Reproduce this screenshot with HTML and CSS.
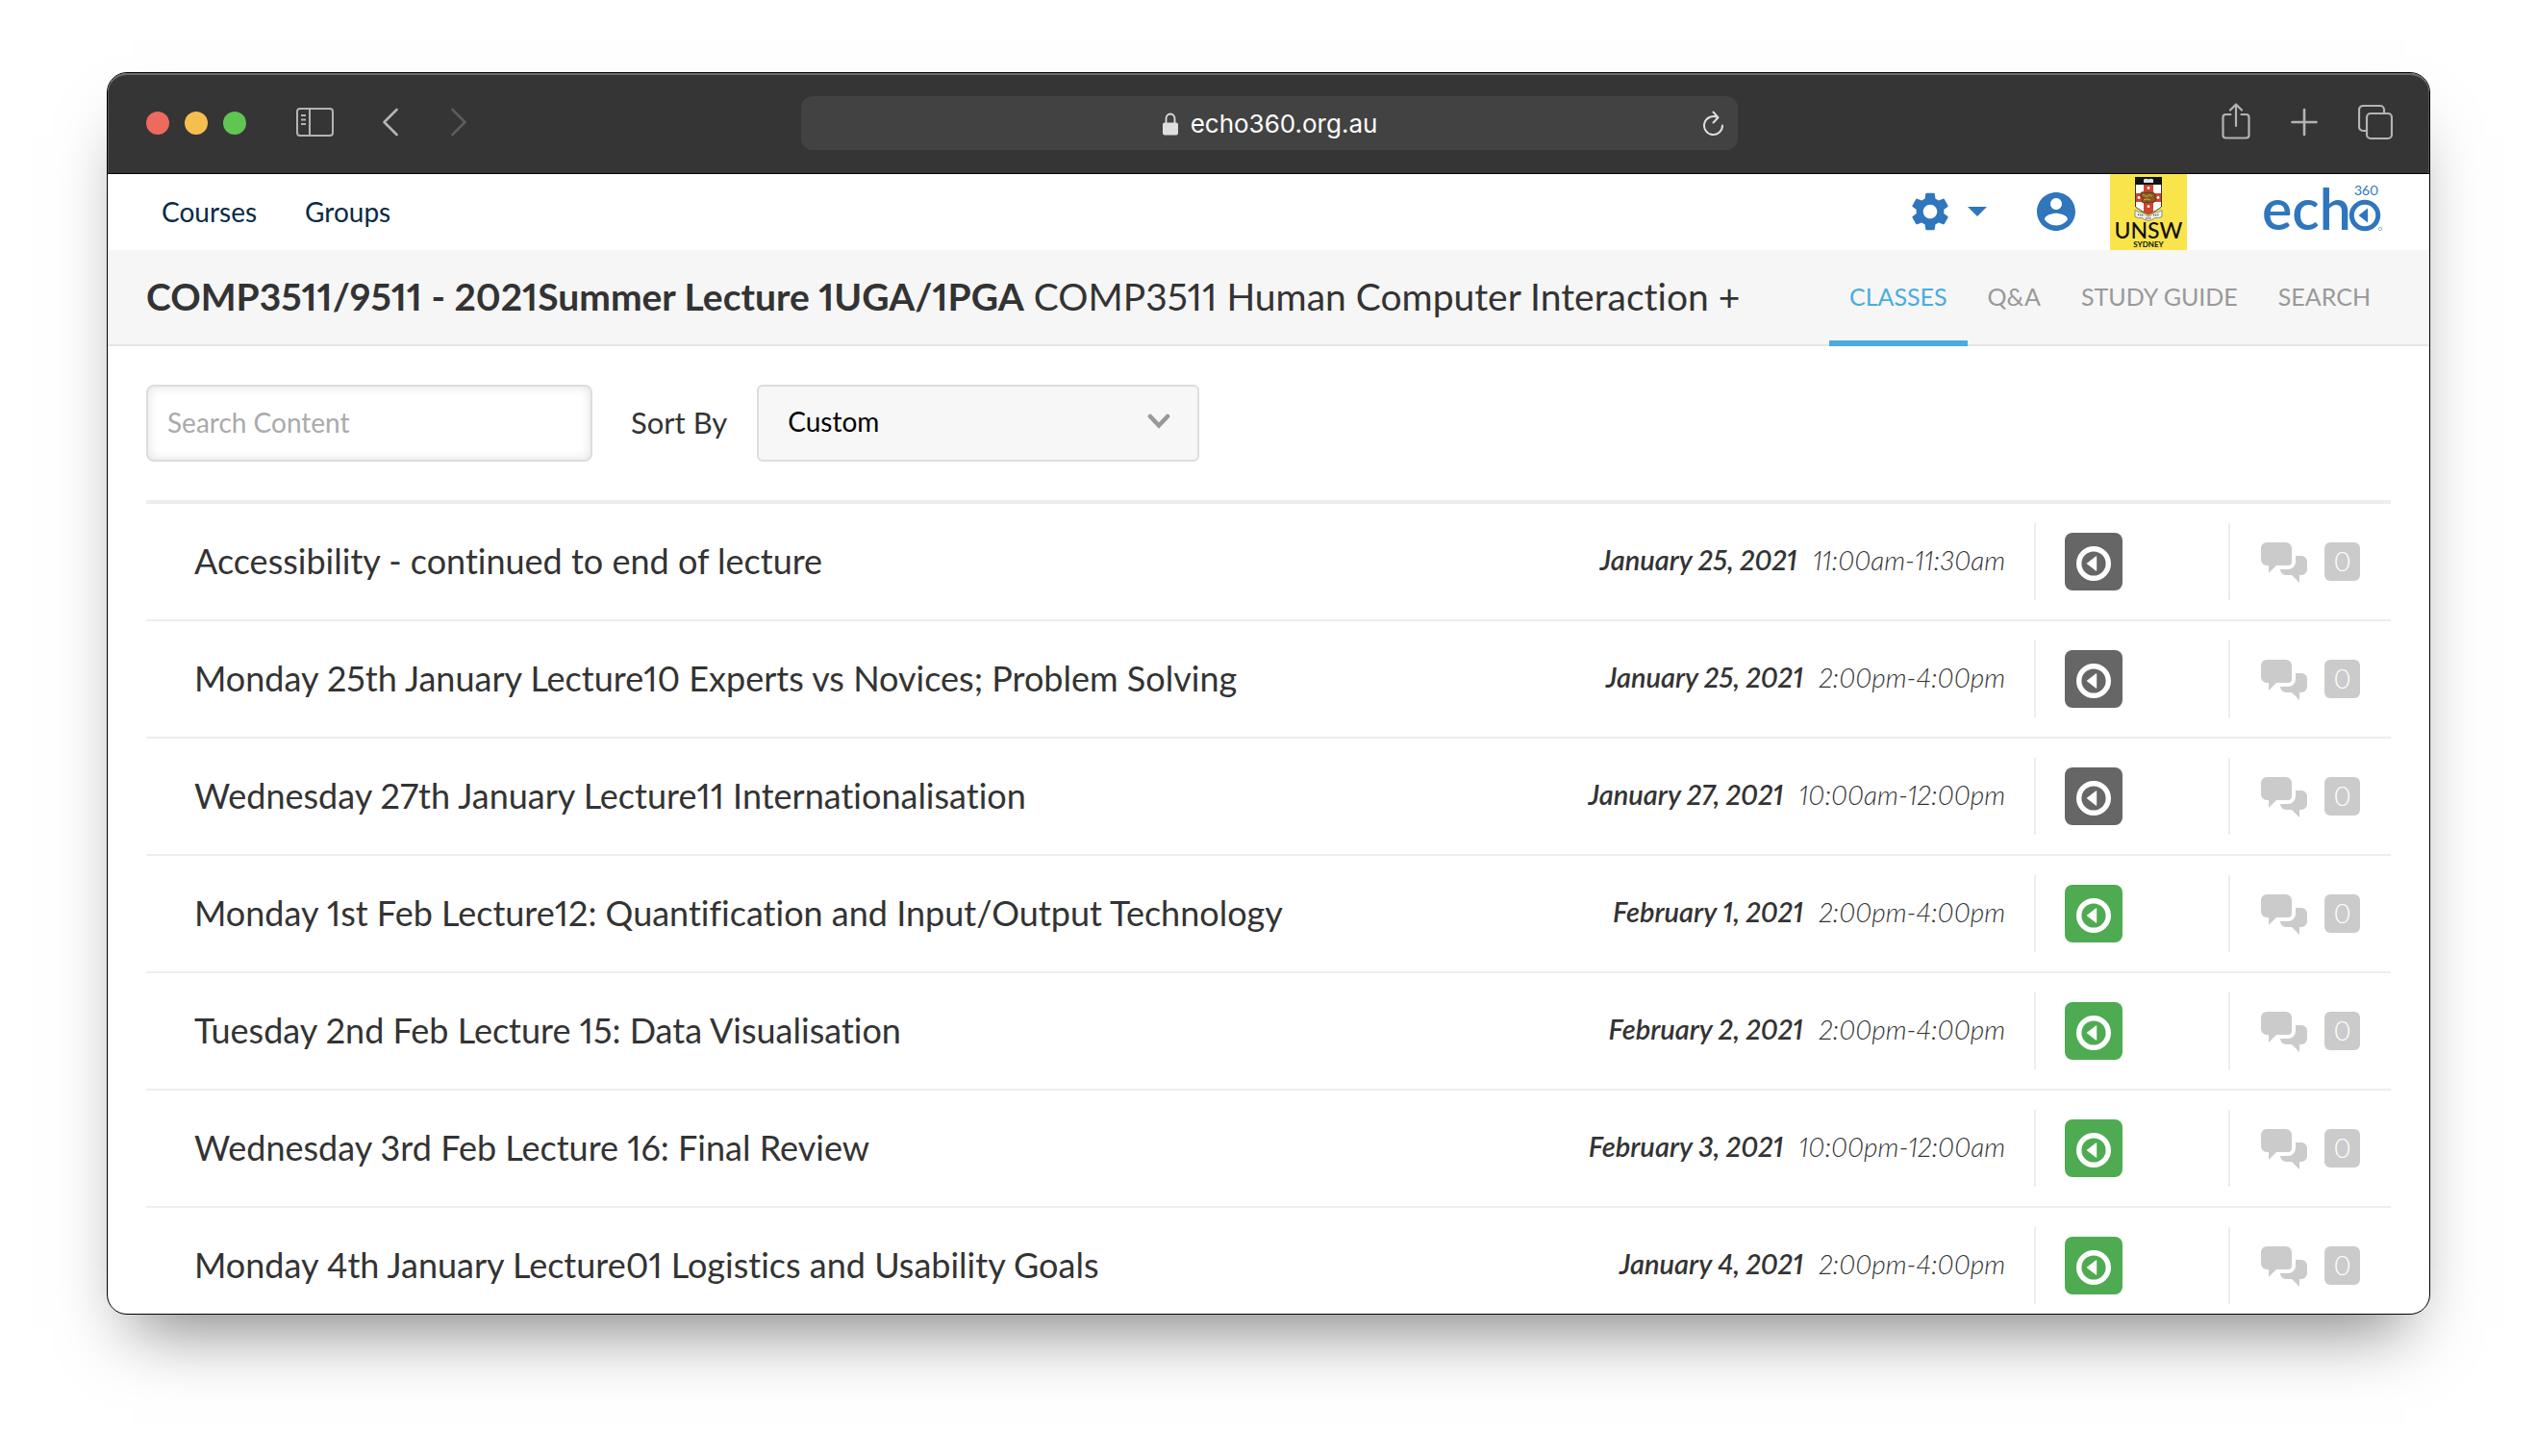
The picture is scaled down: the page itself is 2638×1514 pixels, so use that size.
FILE: index.html
```html
<!DOCTYPE html>
<html lang="en">
<head>
<meta charset="utf-8">
<meta name="viewport" content="width=device-width, initial-scale=1">
<title>Echo360 - COMP3511 Human Computer Interaction</title>
<link rel="stylesheet" href="styles.css">
</head>
<body>
<svg class="defs" aria-hidden="true">
  <symbol id="play" viewBox="0 0 60 60">
    <circle cx="30" cy="32" r="15.3" fill="none" stroke="#fff" stroke-width="5.4"/>
    <path d="M22.6 32 32.2 24.4q1-.6 1 .6v14q0 1.200-1 .6z" fill="#fff"/>
  </symbol>
  <symbol id="chat" viewBox="0 0 48 44">
    <path d="M26 16h16a6 6 0 0 1 6 6v8a6 6 0 0 1-6 6h-2v8l-8-8h-6a6 6 0 0 1-6-6v-8a6 6 0 0 1 6-6z" fill="#cbcbcb"/>
    <path d="M16 28h12a6 6 0 0 0 6-6v-7" fill="none" stroke="#fff" stroke-width="4"/>
    <path d="M6 2h20a6 6 0 0 1 6 6v12a6 6 0 0 1-6 6H16l-8 8v-8H6a6 6 0 0 1-6-6V8a6 6 0 0 1 6-6z" fill="#cbcbcb"/>
  </symbol>
</svg>

<div class="window">
  <header class="titlebar">
    <div class="titlebar-left">
      <div class="lights">
        <button class="light light-close" type="button" aria-label="Close"></button>
        <button class="light light-minimise" type="button" aria-label="Minimise"></button>
        <button class="light light-zoom" type="button" aria-label="Zoom"></button>
      </div>
      <button class="tool tool-sidebar" type="button" aria-label="Sidebar">
        <svg width="40" height="32" viewBox="0 0 40 32" fill="none" stroke="#b4b4b4" stroke-width="2"><rect x="1" y="2" width="37" height="28" rx="3"/><path d="M14 2v28M5 9h5M5 13.500h5M5 18h5"/></svg>
      </button>
      <button class="tool tool-back" type="button" aria-label="Back">
        <svg width="18" height="30" viewBox="0 0 18 30" fill="none" stroke="#b4b4b4" stroke-width="2.600" stroke-linecap="round" stroke-linejoin="round"><path d="M15.500 2 2.500 15l13 13"/></svg>
      </button>
      <button class="tool" type="button" aria-label="Forward">
        <svg width="18" height="30" viewBox="0 0 18 30" fill="none" stroke="#5c5c5c" stroke-width="2.600" stroke-linecap="round" stroke-linejoin="round"><path d="m2.500 2 13 13-13 13"/></svg>
      </button>
    </div>
    <div class="address">
      <svg width="18" height="24" viewBox="0 0 18 24"><rect x="1" y="10.500" width="16" height="13" rx="2" fill="#dedede"/><path d="M4.500 11V6.500a4.500 5 0 0 1 9 0V11" fill="none" stroke="#dedede" stroke-width="1.800"/></svg>
      <span>echo360.org.au</span>
      <button class="tool reload" type="button" aria-label="Reload">
        <svg width="24" height="28" viewBox="0 0 24 28" fill="none" stroke="#dedede" stroke-width="2" stroke-linecap="round" stroke-linejoin="round"><path d="M21 16.500a9.500 9.500 0 1 1-5-8.300M11.500 2.500l5 5.700-5 5.300"/></svg>
      </button>
    </div>
    <div class="titlebar-right">
      <button class="tool" type="button" aria-label="Share">
        <svg width="30" height="40" viewBox="0 0 30 40" fill="none" stroke="#b4b4b4" stroke-width="2.200" stroke-linecap="round" stroke-linejoin="round"><path d="M9.500 12H4.500a3 3 0 0 0-3 3v18.500a3 3 0 0 0 3 3h21a3 3 0 0 0 3-3V15a3 3 0 0 0-3-3h-5M15 24V1.500M9 7.500l6-6 6 6"/></svg>
      </button>
      <button class="tool" type="button" aria-label="New tab">
        <svg width="28" height="30" viewBox="0 0 28 30" fill="none" stroke="#b4b4b4" stroke-width="2.600" stroke-linecap="round"><path d="M14 2v26M1.500 15h25"/></svg>
      </button>
      <button class="tool" type="button" aria-label="Tab overview">
        <svg width="36" height="38" viewBox="0 0 36 38" fill="none" stroke="#b4b4b4" stroke-width="2.200" stroke-linejoin="round"><rect x="9" y="10" width="26" height="26" rx="4"/><path d="M9 28H5a4 4 0 0 1-4-4V6a4 4 0 0 1 4-4h18a4 4 0 0 1 4 4v4"/></svg>
      </button>
    </div>
  </header>

  <nav class="nav" aria-label="Main">
    <div class="nav-links">
      <a href="#courses">Courses</a>
      <a href="#groups">Groups</a>
    </div>
    <div class="nav-tools">
      <button class="tool settings" type="button" aria-label="Settings">
        <svg width="46" height="46" viewBox="0 0 24 24" fill="#2f76bc"><path d="M19.430 12.980c.04-.32.07-.64.07-.98s-.03-.66-.07-.98l2.110-1.650c.19-.15.24-.42.12-.64l-2-3.460c-.12-.22-.39-.3-.61-.22l-2.490 1c-.52-.4-1.080-.73-1.690-.98l-.38-2.650A.488.488 0 0 0 14 2h-4c-.25 0-.46.18-.49.42l-.38 2.650c-.61.25-1.170.59-1.690.98l-2.490-1c-.23-.09-.49 0-.61.22l-2 3.460c-.13.22-.07.49.12.64l2.110 1.650c-.04.32-.07.65-.07.98s.03.66.07.98l-2.110 1.650c-.19.15-.24.42-.12.64l2 3.460c.12.22.39.3.61.22l2.490-1c.52.4 1.080.73 1.690.98l.38 2.650c.03.24.24.42.49.42h4c.25 0 .46-.18.49-.42l.38-2.650c.61-.25 1.170-.59 1.690-.98l2.490 1c.23.09.49 0 .61-.22l2-3.460c.12-.22.07-.49-.12-.64l-2.110-1.650zM12 15.800c-2.100 0-3.800-1.700-3.800-3.800s1.700-3.800 3.800-3.800 3.800 1.700 3.800 3.800-1.700 3.800-3.800 3.800z"/></svg>
        <svg width="20" height="10" viewBox="0 0 20 10" fill="#2f76bc"><path d="M0 0h20L10 10z"/></svg>
      </button>
      <button class="tool account" type="button" aria-label="Account">
        <svg width="48" height="48" viewBox="0 0 24 24" fill="#2f76bc"><path d="M12 2C6.480 2 2 6.480 2 12s4.480 10 10 10 10-4.480 10-10S17.520 2 12 2zm0 3c1.660 0 3 1.340 3 3s-1.340 3-3 3-3-1.340-3-3 1.340-3 3-3zm0 14.200c-2.500 0-4.710-1.280-6-3.220.03-1.990 4-3.080 6-3.080 1.990 0 5.970 1.090 6 3.080-1.290 1.940-3.500 3.220-6 3.220z"/></svg>
      </button>
      <svg class="unsw" width="80" height="79" viewBox="0 0 80 79" role="img" aria-label="UNSW Sydney">
        <rect width="80" height="79" fill="#f9e44c"/>
        <path d="M26.500 3.500h27v30.500q-3 3-13.500 8-10.500-5-13.500-8z" fill="#fff" stroke="#333" stroke-width="1"/>
        <path d="M35 11h10v28.500l-5 2-5-2zM27 20h26v9H27z" fill="#d0432c"/>
        <path d="M26 3h28v8H26z" fill="#111"/>
        <path d="M35 5.500q3-1.500 5 0 2-1.500 5 0v3.500H35z" fill="#dce4ec"/>
        <g fill="#fff"><circle cx="40" cy="14.500" r="1.400"/><circle cx="40" cy="33.700" r="1.400"/><circle cx="30" cy="24.500" r="1.400"/><circle cx="50" cy="24.500" r="1.400"/></g>
        <path d="M32 19.500q2-2 4 0 4-1 7 0 4-1 4 3-1 2 1 4-2 4-4 3-2-2-4 .5-2-1.500-4 0-3 0-3-2 2-1 1-3-3-2-2-5.500z" fill="#8a5a24" stroke="#3d2a14" stroke-width=".7"/>
        <path d="M34 22q2-1 3 1t3-1q2-1 4 1M35 27q3-2 7 0" fill="none" stroke="#d9a441" stroke-width="1"/>
        <path d="M26 37.500q4 3 8 2.500 4 4 6 4t6-4q4 .5 8-2.500v7q-3 1.500-7 1-3 2.500-7 3-4-.5-7-3-4 .5-7-1z" fill="#f2f2ee" stroke="#777" stroke-width=".8"/>
        <path d="M29 42q3 1 6 .5M37 46h6M45 42.500q3 .5 6-.5" stroke="#555" stroke-width="1.600" stroke-dasharray="1.200 .9" fill="none"/>
        <text class="unsw-name" x="40" y="67" text-anchor="middle">UNSW</text>
        <text class="unsw-city" x="40" y="76" text-anchor="middle">SYDNEY</text>
      </svg>
      <a class="echo" href="#home" aria-label="Echo 360">
        <svg width="124" height="56" viewBox="0 0 124 56" fill="#2f76bc">
          <text class="echo-word" x="-2" y="46">ech</text>
          <circle cx="105" cy="31" r="13.700" fill="none" stroke="#2f76bc" stroke-width="5"/>
          <path d="M98.500 31 108 23.500v15z"/>
          <text class="echo-num" x="94" y="10">360</text>
          <circle cx="121" cy="45" r="1.700" fill="none" stroke="#8fb6dc" stroke-width="1"/>
        </svg>
      </a>
    </div>
  </nav>

  <div class="coursebar">
    <h1 class="course"><strong>COMP3511/9511 - 2021Summer Lecture 1UGA/1PGA</strong> COMP3511 Human Computer Interaction +</h1>
    <nav class="tabs" aria-label="Course">
      <a class="tab tab-active" href="#classes">CLASSES</a>
      <a class="tab" href="#qa">Q&amp;A</a>
      <a class="tab" href="#guide">STUDY GUIDE</a>
      <a class="tab" href="#search">SEARCH</a>
    </nav>
  </div>

  <main class="content">
    <form class="filters">
      <input class="search" type="search" placeholder="Search Content" aria-label="Search Content">
      <label class="sort-label" for="sort">Sort By</label>
      <div class="sort">
        <select class="sort-select" id="sort"><option>Custom</option></select>
        <svg class="sort-arrow" width="24" height="18" viewBox="0 0 24 18" fill="none" stroke="#999" stroke-width="4.500" stroke-linecap="round"><path d="m3 4 9 9.500L21 4"/></svg>
      </div>
    </form>

    <ul class="classes">
      <li class="class"><a class="name" href="#c1">Accessibility - continued to end of lecture</a><div class="when"><b>January 25, 2021</b><span>11:00am-11:30am</span></div><div class="media"><button class="play play-off" type="button" aria-label="Media"><svg><use href="#play"/></svg></button></div><div class="comments"><svg class="chat"><use href="#chat"/></svg><span class="count">0</span></div></li>
      <li class="class"><a class="name" href="#c2">Monday 25th January Lecture10 Experts vs Novices; Problem Solving</a><div class="when"><b>January 25, 2021</b><span>2:00pm-4:00pm</span></div><div class="media"><button class="play play-off" type="button" aria-label="Media"><svg><use href="#play"/></svg></button></div><div class="comments"><svg class="chat"><use href="#chat"/></svg><span class="count">0</span></div></li>
      <li class="class"><a class="name" href="#c3">Wednesday 27th January Lecture11 Internationalisation</a><div class="when"><b>January 27, 2021</b><span>10:00am-12:00pm</span></div><div class="media"><button class="play play-off" type="button" aria-label="Media"><svg><use href="#play"/></svg></button></div><div class="comments"><svg class="chat"><use href="#chat"/></svg><span class="count">0</span></div></li>
      <li class="class"><a class="name" href="#c4">Monday 1st Feb Lecture12: Quantification and Input/Output Technology</a><div class="when"><b>February 1, 2021</b><span>2:00pm-4:00pm</span></div><div class="media"><button class="play" type="button" aria-label="Media"><svg><use href="#play"/></svg></button></div><div class="comments"><svg class="chat"><use href="#chat"/></svg><span class="count">0</span></div></li>
      <li class="class"><a class="name" href="#c5">Tuesday 2nd Feb Lecture 15: Data Visualisation</a><div class="when"><b>February 2, 2021</b><span>2:00pm-4:00pm</span></div><div class="media"><button class="play" type="button" aria-label="Media"><svg><use href="#play"/></svg></button></div><div class="comments"><svg class="chat"><use href="#chat"/></svg><span class="count">0</span></div></li>
      <li class="class"><a class="name" href="#c6">Wednesday 3rd Feb Lecture 16: Final Review</a><div class="when"><b>February 3, 2021</b><span>10:00pm-12:00am</span></div><div class="media"><button class="play" type="button" aria-label="Media"><svg><use href="#play"/></svg></button></div><div class="comments"><svg class="chat"><use href="#chat"/></svg><span class="count">0</span></div></li>
      <li class="class"><a class="name" href="#c7">Monday 4th January Lecture01 Logistics and Usability Goals</a><div class="when"><b>January 4, 2021</b><span>2:00pm-4:00pm</span></div><div class="media"><button class="play" type="button" aria-label="Media"><svg><use href="#play"/></svg></button></div><div class="comments"><svg class="chat"><use href="#chat"/></svg><span class="count">0</span></div></li>
    </ul>
  </main>
</div>
</body>
</html>
```
FILE: styles.css
```css
* { box-sizing: border-box; }

body {
  margin: 0;
  height: 100vh;
  padding: 75px 111px 147px;
  display: flex;
  overflow: hidden;
  background: #fff;
  color: #333;
  font: 400 28px/40px Lato, "Open Sans", sans-serif;
  font-variant-numeric: proportional-nums;
  font-variant-ligatures: none;
}

a { color: inherit; text-decoration: none; }
svg { display: block; flex: none; }
button, input, select { font: inherit; font-variant-numeric: inherit; margin: 0; }
.defs { display: none; }

/* Browser window */
.window {
  flex: 1;
  min-width: 0;
  display: flex;
  flex-direction: column;
  overflow: hidden;
  border: 1px solid #000;
  border-radius: 21px;
  background: #fff;
  box-shadow: 0 40px 68px -26px rgba(0, 0, 0, .5);
}

.titlebar {
  flex: none;
  height: 105px;
  display: grid;
  grid-template-columns: 1fr minmax(0, 974px) 1fr;
  align-items: center;
  padding: 0 38px 0 40px;
  border-bottom: 1px solid #000;
  border-radius: 20px 20px 0 0;
  background: #353535;
  box-shadow: inset 0 2px #6c6c6a, inset 1px 0 #555, inset -1px 0 #555;
}
.titlebar-left, .titlebar-right, .lights { display: flex; align-items: center; }
.titlebar-right { justify-content: flex-end; gap: 42px; padding-bottom: 2px; }
.lights { gap: 16px; }
.light { width: 24px; height: 24px; padding: 0; border: 0; border-radius: 50%; }
.light-close { background: #ed6a5e; }
.light-minimise { background: #f5bf4f; }
.light-zoom { background: #61c554; }

.tool {
  display: flex;
  align-items: center;
  padding: 0;
  border: 0;
  background: none;
}
.titlebar-left .tool { padding-bottom: 2px; }
.tool-sidebar { margin: 0 49px 0 52px; }
.tool-back { margin-right: 53px; }

.address {
  position: relative;
  height: 56px;
  display: flex;
  align-items: center;
  justify-content: center;
  gap: 12px;
  padding-top: 2px;
  border-radius: 12px;
  background: #424242;
  color: #fff;
  font-family: Inter, sans-serif;
  font-size: 26px;
}
.reload { position: absolute; right: 13px; top: 14px; }

/* Site navigation */
.nav {
  flex: none;
  height: 79px;
  display: flex;
  align-items: center;
  justify-content: space-between;
  padding: 0 48px 0 56px;
  color: #0b2a45;
}
.nav-links { display: flex; gap: 50px; padding-bottom: 2px; }
.nav-tools { display: flex; align-items: center; }
.settings { gap: 16px; padding-bottom: 2px; }
.account { margin: 0 32px 0 48px; padding-bottom: 2px; }
.unsw-name { font-size: 23px; font-weight: 500; fill: #111; }
.unsw-city { font-size: 8px; font-weight: 700; fill: #111; }
.echo { margin-left: 80px; }
.echo svg { overflow: visible; }
.echo-word { font-size: 59px; font-weight: 600; }
.echo-num { font-size: 14px; }

/* Course header */
.coursebar {
  flex: none;
  height: 100px;
  display: flex;
  align-items: stretch;
  justify-content: space-between;
  padding: 0 40px;
  border-bottom: 2px solid #e5e5e5;
  background: #f6f6f6;
}
.course { margin: 0; font-size: 39px; font-weight: 400; line-height: 96px; white-space: nowrap; }
.course strong { font-weight: 700; }
.tabs { display: flex; margin-bottom: -2px; color: #999; font-size: 25px; line-height: 96px; }
.tab { padding: 0 21px; border-bottom: 6px solid transparent; white-space: nowrap; }
.tab-active { border-color: #4aacdf; color: #4aacdf; }

/* Filters */
.content { padding: 0 40px; }
.filters { display: flex; align-items: center; padding: 40px 0; }
.search {
  width: 464px;
  height: 80px;
  padding: 0 20px 2px;
  border: 2px solid #ddd;
  border-radius: 8px;
  outline: 0;
  appearance: none;
  background: #fff;
  box-shadow: inset 0 0 12px rgba(0, 0, 0, .12);
}
.search::placeholder { color: #aaa; opacity: 1; }
.sort-label { margin: 0 31px 0 40px; padding-bottom: 2px; font-size: 31px; }
.sort { position: relative; width: 460px; }
.sort-select {
  display: block;
  width: 100%;
  height: 80px;
  padding: 0 30px 4px;
  border: 2px solid #ddd;
  border-radius: 6px;
  appearance: none;
  background: #f7f7f7;
  color: #000;
}
.sort-arrow { position: absolute; right: 30px; top: 29px; pointer-events: none; }

/* Class list */
.classes { margin: 0; padding: 0; list-style: none; border-top: 4px solid #ededed; }
.class { display: flex; align-items: center; height: 122px; padding-left: 50px; border-bottom: 2px solid #ededed; }
.name { flex: 1; padding-bottom: 2px; font-size: 36px; white-space: nowrap; }
.when { display: flex; gap: 16px; margin-right: 30px; padding-bottom: 4px; font-style: italic; white-space: nowrap; }
.when b { font-size: 29px; font-weight: 600; }
.when span { font-weight: 300; }
.media, .comments { display: flex; align-items: center; height: 80px; border-left: 2px solid #ededed; }
.media { width: 202px; padding-left: 30px; }
.play { width: 60px; height: 60px; padding: 0; border: 0; border-radius: 8px; background: #4fab52; }
.play-off { background: #666; }
.play svg { width: 60px; height: 60px; }
.comments { width: 169px; padding-left: 32px; gap: 18px; }
.chat { width: 48px; height: 44px; }
.count {
  width: 37px;
  height: 40px;
  border-radius: 6px;
  background: #cbcbcb;
  color: #fff;
  font-weight: 300;
  line-height: 38px;
  text-align: center;
}
```
